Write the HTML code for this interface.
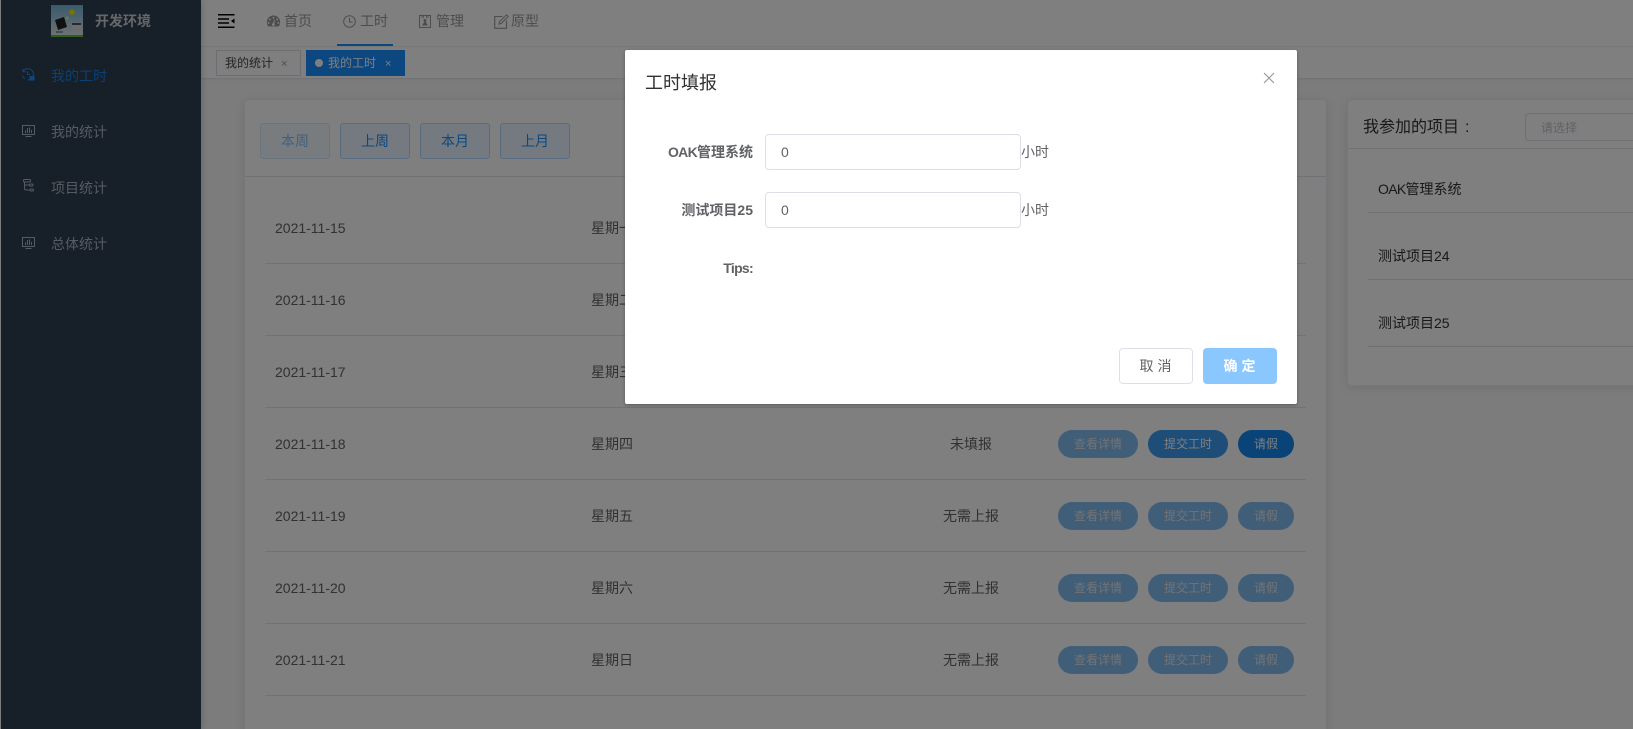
<!DOCTYPE html>
<html lang="zh">
<head>
<meta charset="utf-8">
<title>工时填报</title>
<style>
*{box-sizing:border-box}
html,body{margin:0;padding:0;width:1633px;height:729px;overflow:hidden}
body{font-family:"Liberation Sans","Noto Sans CJK SC",sans-serif;font-size:14px;color:#666}
#root{position:relative;width:1633px;height:729px;overflow:hidden;background:#f9f9fa}
.a{position:absolute;white-space:nowrap}
.t{line-height:20px;height:20px}
svg{position:absolute;overflow:visible}
#side{left:1px;top:0;width:200px;height:729px;background:#2f3e50;box-shadow:2px 0 6px rgba(0,21,41,.15)}
#head{left:201px;top:0;width:1432px;height:47px;background:#fff;border-bottom:1px solid #f0f0f0}
#tabs{left:201px;top:47px;width:1432px;height:32px;background:#fff;border-bottom:1px solid #e6e8ee;box-shadow:0 1px 2px rgba(0,0,0,.06)}
.navt{color:#9a9a9a;font-size:14px}
.tab{top:50px;height:26px;font-size:12px;line-height:26px}
.card{background:#fff;border:1px solid #ebeef5;border-radius:4px;box-shadow:0 2px 12px rgba(0,0,0,.1)}
.qb{top:123px;width:70px;height:36px;border:1px solid #b3d8ff;background:#e8f4ff;color:#1890ff;border-radius:3px;text-align:center;line-height:34px;font-size:14px}
.line{height:1px;background:#dfe6ec}
.p{top:0;height:28px;border-radius:14px;background:#82bcf2;color:#e6e6e6;font-size:12px;line-height:28px;text-align:center}
.row{left:245px;width:1082px;height:28px}
.rt{color:#606266;font-size:14px;line-height:20px;top:4px}
#ov{left:0;top:0;width:1633px;height:729px;background:rgba(0,0,0,.5)}
#modal{left:625px;top:50px;width:672px;height:354px;background:#fff;border-radius:2px;box-shadow:0 1px 3px rgba(0,0,0,.3)}
.lbl{right:544px;font-weight:700;color:#606266;line-height:20px;font-size:14px}
.inp{left:140px;width:256px;height:36px;border:1px solid #dcdfe6;border-radius:4px;color:#606266;line-height:34px;padding-left:15px}
.un{left:396px;color:#606266;line-height:20px}
.mb{top:298px;width:74px;height:36px;border-radius:4px;text-align:center;line-height:34px;font-size:14px;letter-spacing:4px;padding-left:3px}
.nar{letter-spacing:-.7px}
</style>
</head>
<body>
<div id="root">

<div class="a" style="left:0;top:0;width:1px;height:729px;background:#fff"></div>

<!-- header -->
<div class="a" id="head"></div>
<svg style="left:218px;top:14px" width="17" height="14" viewBox="0 0 17 14"><path d="M0 .8h16.500M0 13.200h16.500M0 5h11M0 9h11" stroke="#000" stroke-width="1.500" fill="none"/><path d="M16.500 4.500v5l-3.500-2.500z" fill="#000"/></svg>
<svg style="left:266px;top:15px" width="15" height="12" viewBox="0 0 15 13"><path fill-rule="evenodd" d="M7.500 0.500C3.400 0.500 0.300 3.700 0.300 7.700c0 1.800.6 3.400 1.600 4.800h11.200c1-1.400 1.600-3 1.600-4.800C14.700 3.700 11.600.5 7.500.5zM7.500 2a1 1 0 1 1 0 2 1 1 0 0 1 0-2zM3.600 3.800a1 1 0 1 1 0 2 1 1 0 0 1 0-2zM11.400 3.800a1 1 0 1 1 0 2 1 1 0 0 1 0-2zM2.200 7.600a1 1 0 1 1 0 2 1 1 0 0 1 0-2zM12.800 7.600a1 1 0 1 1 0 2 1 1 0 0 1 0-2zM8.300 5.200L9 5.500 8.300 9.200a1.500 1.500 0 1 1-1.500-.2z" fill="#9a9a9a"/></svg>
<div class="a t navt" style="left:284px;top:11px">首页</div>
<svg style="left:343px;top:15px" width="13" height="13" viewBox="0 0 13 13"><circle cx="6.500" cy="6.500" r="5.800" fill="none" stroke="#9a9a9a" stroke-width="1"/><path d="M6.500 2.800v4.200h3" fill="none" stroke="#9a9a9a" stroke-width="1"/></svg>
<div class="a t navt" style="left:360px;top:11px">工时</div>
<div class="a" style="left:337px;top:44px;width:56px;height:2px;background:#1890ff"></div>
<svg style="left:419px;top:15px" width="12" height="13" viewBox="0 0 12 13"><rect x=".5" y=".5" width="11" height="12" fill="none" stroke="#9a9a9a"/><path d="M3 .5v2.500M4.500.5v2.500M7.500.5v2.500M9 .5v2.500" stroke="#9a9a9a" stroke-width=".8"/><circle cx="6" cy="5.500" r="1.500" fill="#9a9a9a"/><path d="M3 10.500l2.200-3.500h1.600l2.200 3.500z" fill="#9a9a9a"/></svg>
<div class="a t navt" style="left:436px;top:11px">管理</div>
<svg style="left:494px;top:14px" width="15" height="15" viewBox="0 0 15 15"><path d="M8.500 2.500H.7v11.800h11.800V6.500" fill="none" stroke="#9a9a9a" stroke-width="1.100"/><path d="M12.500.8l1.700 1.700-7 7-2.300.6.600-2.300z" fill="none" stroke="#9a9a9a" stroke-width="1"/></svg>
<div class="a t navt" style="left:511px;top:11px">原型</div>

<!-- tabs -->
<div class="a" id="tabs"></div>
<div class="a tab" style="left:216px;width:85px;border:1px solid #d8dce5;background:#fff;color:#4a4a4a;line-height:24px;padding-left:8px">我的统计<span style="position:absolute;left:64px;top:1px;font-size:11px;color:#9a9a9a">×</span></div>
<div class="a tab" style="left:306px;width:99px;background:#1890ff;color:#fff">
  <span style="position:absolute;left:9px;top:9px;width:8px;height:8px;border-radius:50%;background:#fff"></span>
  <span style="position:absolute;left:22px;top:0">我的工时</span>
  <span style="position:absolute;left:79px;top:1px;font-size:11px">×</span>
</div>

<!-- left card -->
<div class="a card" style="left:244px;top:99px;width:1083px;height:660px"></div>
<div class="a qb" style="left:260px;opacity:.55">本周</div>
<div class="a qb" style="left:340px">上周</div>
<div class="a qb" style="left:420px">本月</div>
<div class="a qb" style="left:500px">上月</div>
<div class="a line" style="left:245px;top:176px;width:1081px"></div>

<div class="a line" style="left:265px;top:263px;width:1041px"></div>
<div class="a line" style="left:265px;top:335px;width:1041px"></div>
<div class="a line" style="left:265px;top:407px;width:1041px"></div>
<div class="a line" style="left:265px;top:479px;width:1041px"></div>
<div class="a line" style="left:265px;top:551px;width:1041px"></div>
<div class="a line" style="left:265px;top:623px;width:1041px"></div>
<div class="a line" style="left:265px;top:695px;width:1041px"></div>

<div class="a t" style="left:275px;top:218px;color:#606266">2021-11-15</div><div class="a t" style="left:591px;top:218px;color:#606266">星期一</div>
<div class="a t" style="left:275px;top:290px;color:#606266">2021-11-16</div><div class="a t" style="left:591px;top:290px;color:#606266">星期二</div>
<div class="a t" style="left:275px;top:362px;color:#606266">2021-11-17</div><div class="a t" style="left:591px;top:362px;color:#606266">星期三</div>

<div class="a row" style="top:430px">
  <div class="a rt" style="left:30px">2021-11-18</div><div class="a rt" style="left:346px">星期四</div><div class="a rt" style="left:705px;width:42px;text-align:center">未填报</div>
  <div class="a p" style="left:813px;width:80px">查看详情</div>
  <div class="a p" style="left:903px;width:80px;background:#3d9af0;color:#fff">提交工时</div>
  <div class="a p" style="left:993px;width:56px;background:#1586ee;color:#fff">请假</div>
</div>
<div class="a row" style="top:502px">
  <div class="a rt" style="left:30px">2021-11-19</div><div class="a rt" style="left:346px">星期五</div><div class="a rt" style="left:698px">无需上报</div>
  <div class="a p" style="left:813px;width:80px">查看详情</div><div class="a p" style="left:903px;width:80px">提交工时</div><div class="a p" style="left:993px;width:56px">请假</div>
</div>
<div class="a row" style="top:574px">
  <div class="a rt" style="left:30px">2021-11-20</div><div class="a rt" style="left:346px">星期六</div><div class="a rt" style="left:698px">无需上报</div>
  <div class="a p" style="left:813px;width:80px">查看详情</div><div class="a p" style="left:903px;width:80px">提交工时</div><div class="a p" style="left:993px;width:56px">请假</div>
</div>
<div class="a row" style="top:646px">
  <div class="a rt" style="left:30px">2021-11-21</div><div class="a rt" style="left:346px">星期日</div><div class="a rt" style="left:698px">无需上报</div>
  <div class="a p" style="left:813px;width:80px">查看详情</div><div class="a p" style="left:903px;width:80px">提交工时</div><div class="a p" style="left:993px;width:56px">请假</div>
</div>

<!-- right card -->
<div class="a card" style="left:1347px;top:99px;width:320px;height:287px"></div>
<div class="a" style="left:1363px;top:117px;font-size:16px;line-height:22px;color:#303133">我参加的项目</div>
<div class="a" style="left:1465px;top:117px;font-size:16px;line-height:22px;color:#303133">:</div>
<div class="a" style="left:1525px;top:113px;width:200px;height:28px;border:1px solid #dcdfe6;border-radius:4px;font-size:12px;line-height:28px;padding-left:15px;color:#c0c4cc">请选择</div>
<div class="a line" style="left:1348px;top:148px;width:290px"></div>
<div class="a t" style="left:1378px;top:179px;color:#303133"><span class="nar">OAK</span>管理系统</div>
<div class="a line" style="left:1368px;top:212px;width:270px;background:#dcdfe6"></div>
<div class="a t" style="left:1378px;top:246px;color:#303133">测试项目24</div>
<div class="a line" style="left:1368px;top:279px;width:270px;background:#dcdfe6"></div>
<div class="a t" style="left:1378px;top:313px;color:#303133">测试项目25</div>
<div class="a line" style="left:1368px;top:346px;width:270px;background:#dcdfe6"></div>

<!-- sidebar -->
<div class="a" id="side"></div>
<svg style="left:51px;top:5px" width="32" height="32" viewBox="0 0 32 32">
  <defs><linearGradient id="g" x1="0" y1="0" x2="0" y2="1"><stop offset="0" stop-color="#6fb4d8"/><stop offset=".85" stop-color="#d4e0e6"/></linearGradient></defs>
  <rect width="32" height="32" fill="url(#g)"/><rect y="30" width="32" height="2" fill="#5cc02c"/>
  <circle cx="21" cy="7" r="2.800" fill="#f4e600"/><circle cx="16" cy="13" r="1.500" fill="#ffffaa" opacity=".7"/>
  <path d="M4 15l9-3 3 10-9 3z" fill="#222"/><path d="M21 18h9v2h-9z" fill="#555"/><path d="M21 20.500h9v3.500h-9z" fill="#ddd"/><path d="M5 26h7v2H5z" fill="#8a9aa6"/>
</svg>
<div class="a t" style="left:95px;top:11px;font-weight:700;color:#fff;opacity:.75">开发环境</div>

<svg style="left:22px;top:68px" width="13" height="13" viewBox="0 0 13 13"><path d="M1.200 3.200A5.600 5.600 0 1 1 5.500 11.900M1 1v2.800h2.800M.7 7.500c.3 1.300 1 2.400 2 3.200M5.500 3.500v3h2.500" fill="none" stroke="#1890ff" stroke-width="1"/><rect x="7.500" y="8" width="5" height="4.500" fill="#1890ff"/></svg>
<div class="a t" style="left:51px;top:66px;color:#1880e8">我的工时</div>

<svg style="left:22px;top:125px" width="13" height="13" viewBox="0 0 13 13"><rect x=".5" y=".5" width="12" height="9" fill="none" stroke="#aab6c4"/><path d="M3.500 8V5.500M5.500 8V3M7.500 8V2.500M9.500 8V5" stroke="#aab6c4" stroke-width="1"/><path d="M3.500 11.500h6" stroke="#aab6c4"/></svg>
<div class="a t" style="left:51px;top:122px;color:#aab6c4">我的统计</div>

<svg style="left:23px;top:179px" width="11" height="13" viewBox="0 0 11 13"><rect x=".5" y=".5" width="7" height="2.500" rx="1" fill="none" stroke="#aab6c4"/><path d="M1.500 3v6.500c0 1.500 1 1.500 2 1.500h4M1.500 6h5" fill="none" stroke="#aab6c4"/><rect x="6.500" y="5" width="3.500" height="2" rx="1" fill="none" stroke="#aab6c4"/><rect x="7" y="10" width="3.500" height="2" rx="1" fill="none" stroke="#aab6c4"/></svg>
<div class="a t" style="left:51px;top:178px;color:#aab6c4">项目统计</div>

<svg style="left:22px;top:237px" width="13" height="13" viewBox="0 0 13 13"><rect x=".5" y=".5" width="12" height="9" fill="none" stroke="#aab6c4"/><path d="M3.500 8V5.500M5.500 8V3M7.500 8V2.500M9.500 8V5" stroke="#aab6c4" stroke-width="1"/><path d="M3.500 11.500h6" stroke="#aab6c4"/></svg>
<div class="a t" style="left:51px;top:234px;color:#aab6c4">总体统计</div>

<!-- overlay -->
<div class="a" id="ov"></div>

<!-- modal -->
<div class="a" id="modal">
  <div class="a" style="left:20px;top:21px;font-size:18px;line-height:24px;color:#303133">工时填报</div>
  <svg style="left:638px;top:22px" width="12" height="12" viewBox="0 0 12 12"><path d="M1 1l10 10M11 1L1 11" stroke="#909399" stroke-width="1" fill="none"/></svg>

  <div class="a lbl" style="top:92px"><span class="nar">OAK</span>管理系统</div>
  <div class="a inp" style="top:84px">0</div>
  <div class="a un" style="top:92px">小时</div>

  <div class="a lbl" style="top:150px">测试项目25</div>
  <div class="a inp" style="top:142px">0</div>
  <div class="a un" style="top:150px">小时</div>

  <div class="a lbl" style="top:208px"><span class="nar">Tips:</span></div>

  <div class="a mb" style="left:494px;border:1px solid #dcdfe6;color:#606266;background:#fff">取消</div>
  <div class="a mb" style="left:578px;background:#8bc7ff;color:#fff;line-height:36px;font-weight:700">确定</div>
</div>

</div>
</body>
</html>
